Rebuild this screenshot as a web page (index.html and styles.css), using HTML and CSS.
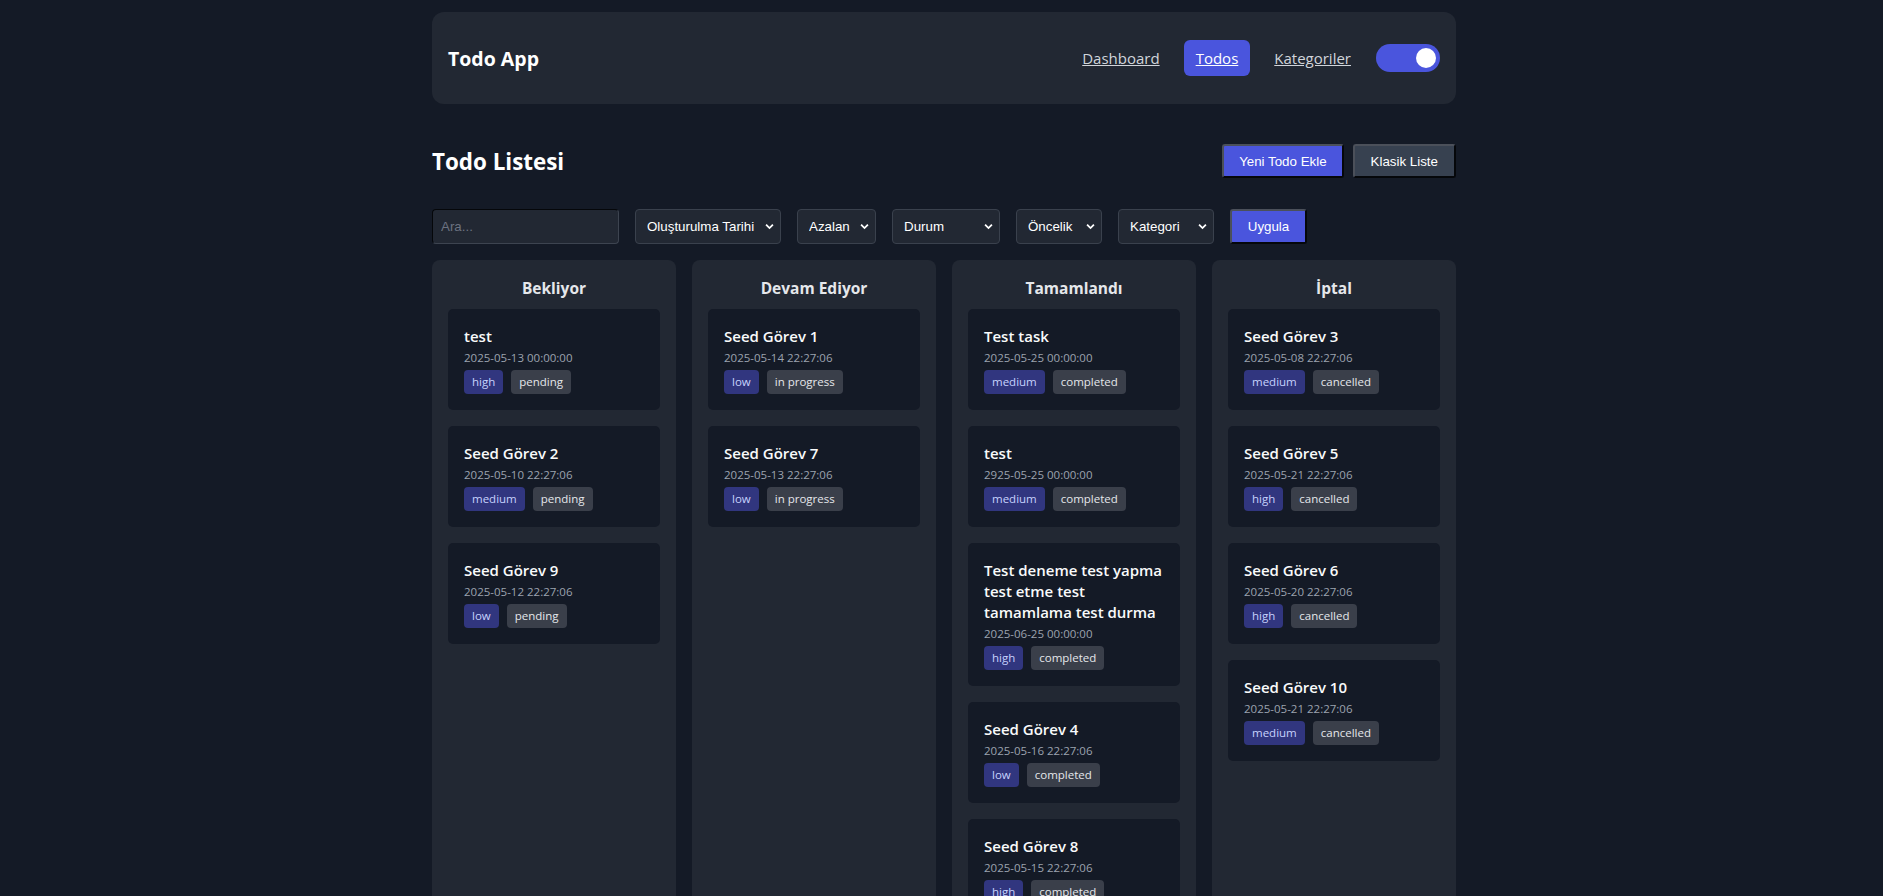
FILE: index.html
```html
<!DOCTYPE html>
<html lang="tr">
<head>
<meta charset="utf-8">
<title>Todo App</title>
<link rel="stylesheet" href="styles.css">
</head>
<body>
<div class="app">
  <header class="topbar">
    <div class="brand">Todo App</div>
    <nav class="nav">
      <a href="#" class="nav-link">Dashboard</a>
      <a href="#" class="nav-link active">Todos</a>
      <a href="#" class="nav-link">Kategoriler</a>
      <button class="toggle" aria-label="Tema"><span class="knob"></span></button>
    </nav>
  </header>

  <main class="main">
    <div class="title-row">
      <h1 class="page-title">Todo Listesi</h1>
      <div class="actions">
        <button class="btn btn-primary btn-new">Yeni Todo Ekle</button>
        <button class="btn btn-secondary">Klasik Liste</button>
      </div>
    </div>

    <form class="filters">
      <input class="search" type="text" placeholder="Ara...">
      <select class="select sel-date"><option>Oluşturulma Tarihi</option></select>
      <select class="select sel-order"><option>Azalan</option></select>
      <select class="select sel-status"><option>Durum</option></select>
      <select class="select sel-priority"><option>Öncelik</option></select>
      <select class="select sel-category"><option>Kategori</option></select>
      <button type="button" class="btn btn-primary btn-apply">Uygula</button>
    </form>

    <div class="board">
      <section class="column">
        <h2 class="column-title">Bekliyor</h2>
        <div class="card"><h3 class="card-title">test</h3><p class="card-date">2025-05-13 00:00:00</p><div class="tags"><span class="tag prio">high</span><span class="tag status">pending</span></div></div>
        <div class="card"><h3 class="card-title">Seed Görev 2</h3><p class="card-date">2025-05-10 22:27:06</p><div class="tags"><span class="tag prio">medium</span><span class="tag status">pending</span></div></div>
        <div class="card"><h3 class="card-title">Seed Görev 9</h3><p class="card-date">2025-05-12 22:27:06</p><div class="tags"><span class="tag prio">low</span><span class="tag status">pending</span></div></div>
      </section>
      <section class="column">
        <h2 class="column-title">Devam Ediyor</h2>
        <div class="card"><h3 class="card-title">Seed Görev 1</h3><p class="card-date">2025-05-14 22:27:06</p><div class="tags"><span class="tag prio">low</span><span class="tag status">in progress</span></div></div>
        <div class="card"><h3 class="card-title">Seed Görev 7</h3><p class="card-date">2025-05-13 22:27:06</p><div class="tags"><span class="tag prio">low</span><span class="tag status">in progress</span></div></div>
      </section>
      <section class="column">
        <h2 class="column-title">Tamamlandı</h2>
        <div class="card"><h3 class="card-title">Test task</h3><p class="card-date">2025-05-25 00:00:00</p><div class="tags"><span class="tag prio">medium</span><span class="tag status">completed</span></div></div>
        <div class="card"><h3 class="card-title">test</h3><p class="card-date">2925-05-25 00:00:00</p><div class="tags"><span class="tag prio">medium</span><span class="tag status">completed</span></div></div>
        <div class="card"><h3 class="card-title">Test deneme test yapma test etme test tamamlama test durma</h3><p class="card-date">2025-06-25 00:00:00</p><div class="tags"><span class="tag prio">high</span><span class="tag status">completed</span></div></div>
        <div class="card"><h3 class="card-title">Seed Görev 4</h3><p class="card-date">2025-05-16 22:27:06</p><div class="tags"><span class="tag prio">low</span><span class="tag status">completed</span></div></div>
        <div class="card"><h3 class="card-title">Seed Görev 8</h3><p class="card-date">2025-05-15 22:27:06</p><div class="tags"><span class="tag prio">high</span><span class="tag status">completed</span></div></div>
      </section>
      <section class="column">
        <h2 class="column-title">İptal</h2>
        <div class="card"><h3 class="card-title">Seed Görev 3</h3><p class="card-date">2025-05-08 22:27:06</p><div class="tags"><span class="tag prio">medium</span><span class="tag status">cancelled</span></div></div>
        <div class="card"><h3 class="card-title">Seed Görev 5</h3><p class="card-date">2025-05-21 22:27:06</p><div class="tags"><span class="tag prio">high</span><span class="tag status">cancelled</span></div></div>
        <div class="card"><h3 class="card-title">Seed Görev 6</h3><p class="card-date">2025-05-20 22:27:06</p><div class="tags"><span class="tag prio">high</span><span class="tag status">cancelled</span></div></div>
        <div class="card"><h3 class="card-title">Seed Görev 10</h3><p class="card-date">2025-05-21 22:27:06</p><div class="tags"><span class="tag prio">medium</span><span class="tag status">cancelled</span></div></div>
      </section>
    </div>
  </main>
</div>
</body>
</html>
```

FILE: styles.css
```css
html {
  scrollbar-width: none;
}

body {
  margin: 0;
  padding: 12px 0 40px 5px;
  background: #141a26;
  color: #f3f4f6;
  font-family: "Open Sans", "Noto Sans", sans-serif;
}

.app {
  width: 1024px;
  margin: 0 auto;
}

/* Top bar */
.topbar {
  display: flex;
  align-items: center;
  justify-content: space-between;
  height: 92px;
  box-sizing: border-box;
  padding: 0 16px;
  background: #222833;
  border-radius: 12px;
}

.brand {
  font-size: 19.5px;
  font-weight: 700;
  color: #ffffff;
}

.nav {
  display: flex;
  align-items: center;
  gap: 12px;
}

.nav-link {
  display: block;
  padding: 7px 12px;
  font-size: 15px;
  line-height: 22px;
  color: #d1d5db;
  text-decoration: underline;
  border-radius: 6px;
}

.nav-link.active {
  background: #4a55dd;
  color: #ffffff;
}

.toggle {
  display: flex;
  justify-content: flex-end;
  align-items: center;
  width: 64px;
  height: 28px;
  padding: 0 4px;
  margin-left: 1px;
  border: 0;
  border-radius: 14px;
  background: #4a55dd;
  box-sizing: border-box;
}

.knob {
  width: 20px;
  height: 20px;
  border-radius: 50%;
  background: #ffffff;
}

/* Title row */
.main {
  padding-top: 40px;
}

.title-row {
  display: flex;
  align-items: center;
  justify-content: space-between;
  height: 34px;
}

.page-title {
  margin: 0;
  font-size: 22.4px;
  font-weight: 700;
  color: #ffffff;
}

.actions {
  display: flex;
  gap: 9px;
}

.btn {
  height: 34px;
  padding: 0 16px;
  font-family: "Liberation Sans", Arial, sans-serif;
  font-size: 13.333px;
  color: #ffffff;
  border: 2px solid;
  border-color: #4b505a #05070a #05070a #4b505a;
  border-radius: 3px;
}

.btn-new {
  padding: 0 15px;
}

.btn-primary {
  background: #4a55dd;
}

.btn-secondary {
  background: #374150;
}

/* Filters */
.filters {
  display: flex;
  gap: 16px;
  margin-top: 31px;
}

.search,
.select {
  height: 35px;
  box-sizing: border-box;
  font-family: "Liberation Sans", Arial, sans-serif;
  font-size: 13.333px;
  color: #ffffff;
  background-color: #222833;
  border-radius: 4px;
}

.search {
  width: 187px;
  padding: 0 8px;
  border: 1px solid;
  border-color: #05070a #3d4450 #3d4450 #05070a;
}

.search::placeholder {
  color: #6b7280;
}

.select {
  appearance: none;
  -webkit-appearance: none;
  padding: 0 24px 0 11px;
  border: 1px solid #3a414d;
  background-image: url("data:image/svg+xml;utf8,<svg xmlns='http://www.w3.org/2000/svg' width='10' height='7' viewBox='0 0 10 7'><path d='M1.2 1.4 5 5.2 8.8 1.4' fill='none' stroke='white' stroke-width='2'/></svg>");
  background-repeat: no-repeat;
  background-size: 9px 7px;
  background-position: right 6px center;
}

.sel-date { width: 146px; }
.sel-order { width: 79px; }
.sel-status { width: 108px; }
.sel-priority { width: 86px; }
.sel-category { width: 96px; }

.btn-apply {
  height: 35px;
  width: 77px;
  padding: 0;
}

/* Board */
.board {
  display: grid;
  grid-template-columns: repeat(4, 1fr);
  gap: 16px;
  margin-top: 16px;
  align-items: stretch;
}

.column {
  background: #222833;
  border-radius: 8px;
  padding: 16px 16px 16px;
  min-height: 640px;
}

.column-title {
  margin: 0 0 9px;
  font-size: 15.5px;
  line-height: 24px;
  font-weight: 700;
  text-align: center;
  color: #e5e7eb;
}

.card {
  background: #141a26;
  border-radius: 5px;
  padding: 17px 16px 16px;
  margin-bottom: 16px;
}

.card-title {
  margin: 0;
  font-size: 15px;
  line-height: 21px;
  font-weight: 600;
  color: #f9fafb;
}

.card-date {
  margin: 0;
  font-size: 11.5px;
  line-height: 21px;
  color: #9ca3af;
}

.tags {
  display: flex;
  gap: 8px;
  margin-top: 2px;
}

.tag {
  display: block;
  height: 24px;
  line-height: 24px;
  padding: 0 8px;
  font-size: 11.5px;
  border-radius: 4px;
}

.tag.prio {
  background: #31367f;
  color: #c7d2fe;
}

.tag.status {
  background: #3a3f4a;
  color: #e5e7eb;
}
```
